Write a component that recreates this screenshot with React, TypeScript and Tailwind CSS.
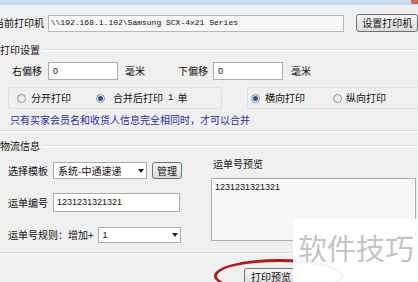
import React from 'react';

const Radio: React.FC<{ checked?: boolean }> = ({ checked }) => (
  <span className="w-[9px] h-[9px] shrink-0 rounded-full border border-[#8f9396] bg-gradient-to-br from-[#dcdcdc] to-white flex items-center justify-center">
    {checked && <span className="w-[5px] h-[5px] rounded-full bg-[#2d5596]" />}
  </span>
);

const Btn: React.FC<{ className?: string; children: React.ReactNode }> = ({ className = '', children }) => (
  <div
    className={`flex items-center justify-center rounded-[3px] border border-[#707070] bg-gradient-to-b from-[#f6f6f6] to-[#dadada] text-[10px] leading-none whitespace-nowrap ${className}`}
  >
    {children}
  </div>
);

const Select: React.FC<{ className?: string; value: string }> = ({ className = '', value }) => (
  <div className={`flex items-center border border-[#a5acb5] bg-white ${className}`}>
    <span className="flex-1 min-w-0 pl-[4px] whitespace-nowrap">{value}</span>
    <span className="w-[10px] shrink-0 h-full flex items-center justify-center">
      <svg width="6" height="4" viewBox="0 0 6 4">
        <path d="M0 0h6L3 4z" fill="#222" />
      </svg>
    </span>
  </div>
);

export default function App() {
  return (
    <div className="relative w-[418px] h-[282px] overflow-hidden bg-[#efefef] text-[#111] text-[10px] leading-none font-['Noto_Sans_CJK_SC','Noto_Sans',sans-serif]">
      {/* window title strip */}
      <div className="h-[5px] flex justify-end bg-gradient-to-b from-[#d3e2f4] to-[#bdd2eb]">
        <div className="w-[7px] h-[4px] bg-[#c9695c] rounded-bl-[2px]" />
      </div>

      {/* printer row */}
      <div className="mt-[9px] h-[18px] flex items-center">
        <div className="w-[48px] overflow-hidden whitespace-nowrap">
          <span className="ml-[-6px]">当前打印机</span>
        </div>
        <div className="w-[298px] h-[17px] flex items-center border border-[#b4b7bb] bg-[#f7f7f7] pl-[2px] font-['Liberation_Mono',monospace] text-[8px] whitespace-nowrap">
          \\192.168.1.102\Samsung SCX-4x21 Series
        </div>
        <Btn className="ml-[12px] w-[62px] h-[18px]">设置打印机</Btn>
      </div>

      {/* print settings header */}
      <div className="mt-[12px] h-[12px] flex items-center">
        <span>打印设置</span>
        <div className="flex-1 ml-[4px] border-t border-[#dcdcdc] border-b-white border-b" />
      </div>

      {/* offset row */}
      <div className="mt-[6px] h-[18px] flex items-center pl-[12px]">
        <span>右偏移</span>
        <div className="ml-[6px] w-[70px] h-[18px] flex items-center border border-[#abadb3] bg-white pl-[4px] font-['Liberation_Sans',sans-serif] text-[9px]">0</div>
        <span className="ml-[7px]">毫米</span>
        <span className="ml-[33px]">下偏移</span>
        <div className="ml-[5px] w-[70px] h-[18px] flex items-center border border-[#abadb3] bg-white pl-[4px] font-['Liberation_Sans',sans-serif] text-[9px]">0</div>
        <span className="ml-[8px]">毫米</span>
      </div>

      {/* radio row */}
      <div className="mt-[7px] h-[22px] flex">
        <div className="ml-[8px] w-[214px] flex items-center pl-[8px] border border-[#e0e0e0] rounded-[2px]">
          <Radio />
          <span className="ml-[5px]">分开打印</span>
          <span className="ml-[25px]"><Radio checked /></span>
          <span className="ml-[8px]">合并后打印</span>
          <span className="ml-[5px] font-['Liberation_Mono',monospace] text-[9px]">1</span>
          <span className="ml-[4px]">单</span>
        </div>
        <div className="ml-[25px] flex-1 flex items-center pl-[3px] border border-r-0 border-[#e0e0e0] rounded-l-[2px]">
          <Radio checked />
          <span className="ml-[5px]">横向打印</span>
          <span className="ml-[28px]"><Radio /></span>
          <span className="ml-[4px]">纵向打印</span>
        </div>
      </div>

      {/* hint */}
      <div className="mt-[5px] h-[12px] leading-[12px] pl-[10px] text-[#2b2ba6]">
        只有买家会员名和收货人信息完全相同时，才可以合并
      </div>

      <div className="mt-[4px] border-t border-[#dadada] border-b border-b-white" />

      {/* logistics header */}
      <div className="mt-[8px] h-[12px] flex items-center">
        <span>物流信息</span>
        <div className="flex-1 ml-[4px] border-t border-[#dcdcdc] border-b-white border-b" />
      </div>

      {/* logistics body */}
      <div className="flex">
        <div className="w-[211px] pl-[8px] flex flex-col">
          <div className="mt-[10px] h-[17px] flex items-center">
            <span>选择模板</span>
            <Select className="ml-[5px] w-[94px] h-[17px]" value="系统-中通速递" />
            <Btn className="ml-[5px] w-[30px] h-[17px]">管理</Btn>
          </div>
          <div className="mt-[14px] h-[19px] flex items-center">
            <span>运单编号</span>
            <div className="ml-[5px] w-[127px] h-[19px] flex items-center border border-[#abadb3] bg-white pl-[3px] font-['Liberation_Sans',sans-serif] text-[9px]">
              1231231321321
            </div>
          </div>
          <div className="mt-[15px] h-[16px] flex items-center">
            <span className="whitespace-nowrap">运单号规则：增加+</span>
            <Select className="ml-[4px] w-[83px] h-[16px] font-['Liberation_Sans',sans-serif] text-[9px]" value="1" />
          </div>
        </div>
        <div className="flex-1 flex flex-col pr-[2px]">
          <div className="mt-[6px] h-[12px] flex items-center pl-[2px]">运单号预览</div>
          <div className="mt-[8px] h-[63px] border border-[#abadb3] bg-[#f7f7f7] pl-[3px] pt-[4px] font-['Liberation_Sans',sans-serif] text-[9px]">
            1231231321321
          </div>
        </div>
      </div>

      <div className="mt-[9px] border-t border-[#dcdcdc] border-b border-b-white" />

      {/* bottom buttons */}
      <div className="mt-[14px] flex pl-[244px]">
        <Btn className="w-[54px] h-[18px]">打印预览</Btn>
      </div>

      {/* red highlight ellipse */}
      <div className="absolute left-[214px] top-[259px] w-[130px] h-[34px] rounded-[50%] border-[3px] border-[#ab1e1e]" />

      {/* watermark */}
      <div className="absolute left-[293px] top-[219px] w-[125px] h-[63px] bg-white/95 pl-[5px] pt-[14px]">
        <span className="text-[29px] leading-[29px] text-[#c4c4c4] whitespace-nowrap">软件技巧</span>
      </div>
    </div>
  );
}
